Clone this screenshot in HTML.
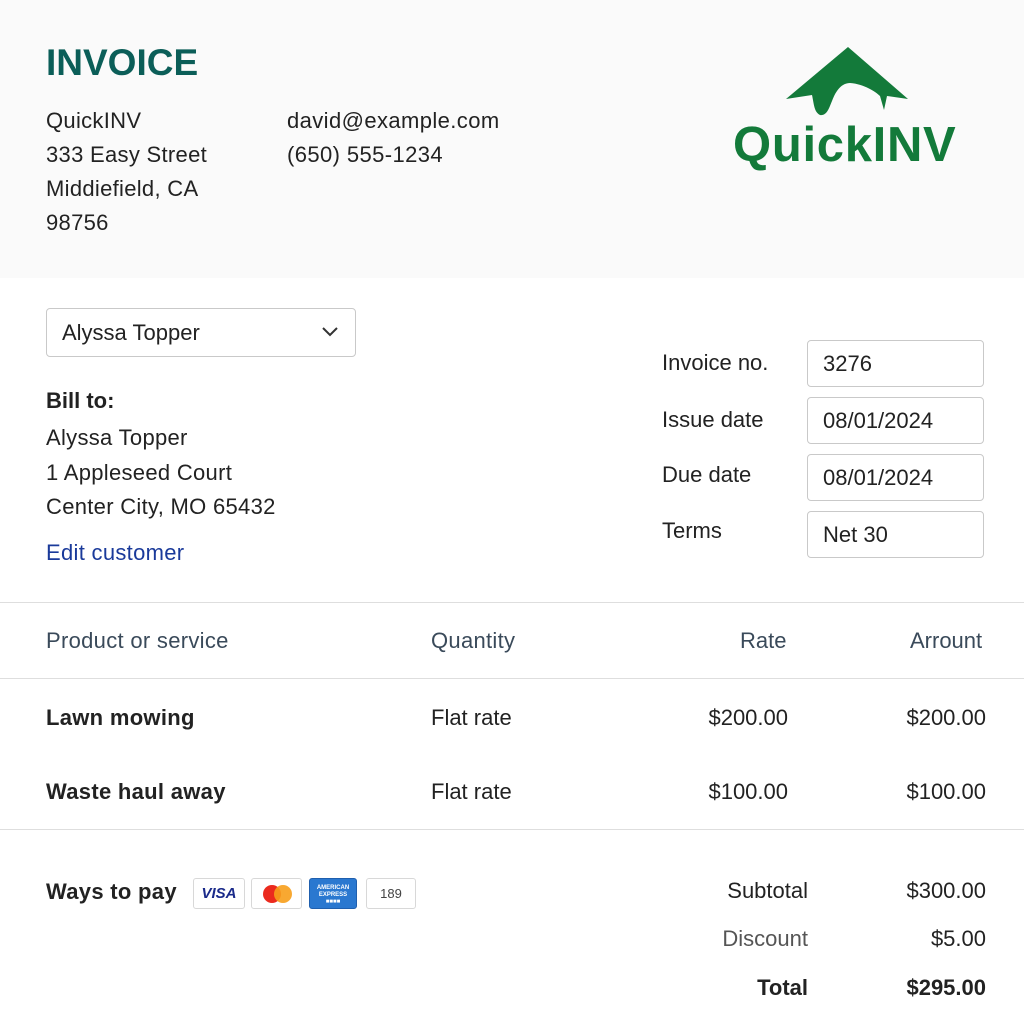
<!DOCTYPE html>
<html><head><style>
body{margin:0;width:1024px;height:1024px;background:#fff;font-family:"Liberation Sans",sans-serif;color:#222;position:relative;overflow:hidden}
.a{position:absolute;white-space:nowrap}
.hdr{position:absolute;left:0;top:0;width:1024px;height:278px;background:#fafafa}
.box{position:absolute;border:1px solid #c9c9c9;border-radius:4px;background:#fff;font-size:22px;box-sizing:border-box;padding-left:15px;display:flex;align-items:center}
.line{position:absolute;left:0;width:1024px;height:1px;background:#dedede}
.card{position:absolute;top:878px;height:31px;border:1px solid #d8d8d8;border-radius:3px;background:#fff;box-sizing:border-box}
</style></head><body>
<div class="hdr"></div>
<div class="a" style="left:46px;top:42px;font-size:37px;font-weight:bold;color:#0b5e58">INVOICE</div>
<div class="a" style="left:46px;top:104px;font-size:22px;line-height:34px;color:#222;letter-spacing:0.3px">QuickINV<br>333 Easy Street<br>Middiefield, CA<br>98756</div>
<div class="a" style="left:287px;top:104px;font-size:22px;line-height:34px;letter-spacing:0.4px">david@example.com<br>(650) 555-1234</div>
<svg class="a" style="left:780px;top:44px" width="135" height="75" viewBox="780 44 135 75"><path d="M848 47 L786 99 L812 95 C814 104 814 112 820 115 C827 116 829 108 832 101 C836 90 842 83 850 83 C864 84 876 92 880 96 L884 110 L887 96 L908 99 Z" fill="#137a3a"/></svg>
<div class="a" style="left:733px;top:117px;font-size:49px;font-weight:bold;color:#137a3a;letter-spacing:0.7px">QuickINV</div>
<div class="box" style="left:46px;top:308px;width:310px;height:49px">Alyssa Topper</div>
<svg class="a" style="left:320px;top:325px" width="20" height="14"><path d="M3 3 L10 10 L17 3" fill="none" stroke="#333" stroke-width="2"/></svg>
<div class="a" style="left:46px;top:388px;font-size:22px;font-weight:bold">Bill to:</div>
<div class="a" style="left:46px;top:421px;font-size:22px;line-height:34.5px;letter-spacing:0.3px">Alyssa Topper<br>1 Appleseed Court<br>Center City, MO 65432</div>
<div class="a" style="left:46px;top:540px;font-size:22px;color:#1a3a9a;letter-spacing:0.3px">Edit customer</div>
<div class="a" style="left:662px;top:350px;font-size:22px">Invoice no.</div>
<div class="a" style="left:662px;top:407px;font-size:22px">Issue date</div>
<div class="a" style="left:662px;top:462px;font-size:22px">Due date</div>
<div class="a" style="left:662px;top:518px;font-size:22px">Terms</div>
<div class="box" style="left:807px;top:340px;width:177px;height:47px">3276</div>
<div class="box" style="left:807px;top:397px;width:177px;height:47px">08/01/2024</div>
<div class="box" style="left:807px;top:454px;width:177px;height:47px">08/01/2024</div>
<div class="box" style="left:807px;top:511px;width:177px;height:47px">Net 30</div>
<div class="line" style="top:602px"></div>
<div class="a" style="left:46px;top:628px;font-size:22px;color:#3a4a5a;letter-spacing:0.3px">Product or service</div>
<div class="a" style="left:431px;top:628px;font-size:22px;color:#3a4a5a;letter-spacing:0.3px">Quantity</div>
<div class="a" style="left:740px;top:628px;font-size:22px;color:#3a4a5a">Rate</div>
<div class="a" style="left:910px;top:628px;font-size:22px;color:#3a4a5a">Arrount</div>
<div class="line" style="top:678px"></div>
<div class="a" style="left:46px;top:705px;font-size:22px;font-weight:bold;letter-spacing:0.3px">Lawn mowing</div>
<div class="a" style="left:431px;top:705px;font-size:22px">Flat rate</div>
<div class="a" style="right:236px;top:705px;font-size:22px">$200.00</div>
<div class="a" style="right:38px;top:705px;font-size:22px">$200.00</div>
<div class="a" style="left:46px;top:779px;font-size:22px;font-weight:bold;letter-spacing:0.3px">Waste haul away</div>
<div class="a" style="left:431px;top:779px;font-size:22px">Flat rate</div>
<div class="a" style="right:236px;top:779px;font-size:22px">$100.00</div>
<div class="a" style="right:38px;top:779px;font-size:22px">$100.00</div>
<div class="line" style="top:829px"></div>
<div class="a" style="left:46px;top:879px;font-size:22px;font-weight:bold;letter-spacing:0.3px">Ways to pay</div>
<div class="card" style="left:193px;width:52px;font:italic bold 15px 'Liberation Sans';color:#1a2a8a;text-align:center;line-height:29px">VISA</div>
<div class="card" style="left:251px;width:51px"><div style="position:absolute;left:11px;top:6px;width:18px;height:18px;border-radius:50%;background:#eb2a1e"></div><div style="position:absolute;left:22px;top:6px;width:18px;height:18px;border-radius:50%;background:#f79e1b;opacity:.9"></div></div>
<div class="card" style="left:309px;width:48px;background:#2a78d0;border-color:#1f5fae;color:#fff;font-size:6px;font-weight:bold;text-align:center;line-height:7px;padding-top:6px">AMERICAN<br>EXPRESS<br>■■■■</div>
<div class="card" style="left:366px;width:50px;font-size:13px;color:#444;text-align:center;line-height:29px">189</div>
<div class="a" style="right:216px;top:878px;font-size:22px">Subtotal</div>
<div class="a" style="right:38px;top:878px;font-size:22px">$300.00</div>
<div class="a" style="right:216px;top:926px;font-size:22px;color:#555">Discount</div>
<div class="a" style="right:38px;top:926px;font-size:22px">$5.00</div>
<div class="a" style="right:216px;top:975px;font-size:22px;font-weight:bold">Total</div>
<div class="a" style="right:38px;top:975px;font-size:22px;font-weight:bold">$295.00</div>
</body></html>
